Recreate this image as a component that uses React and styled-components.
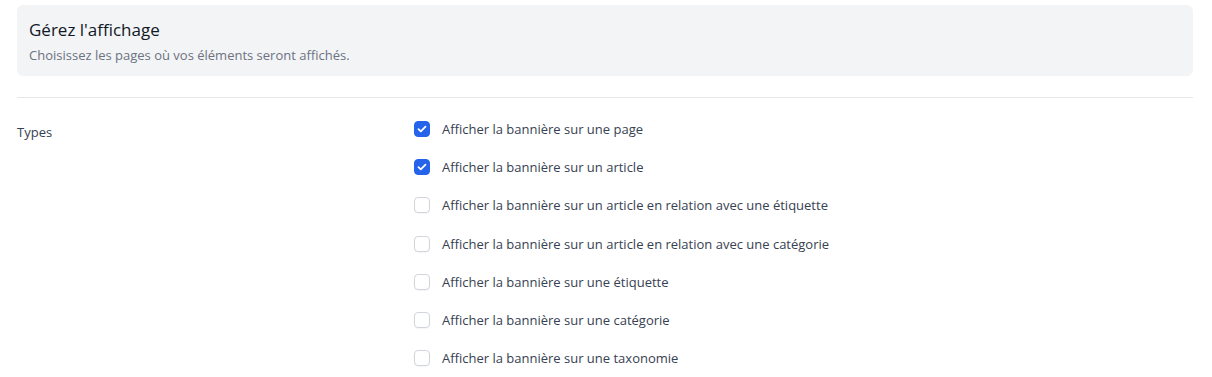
import React, { useState } from 'react';
import styled, { createGlobalStyle } from 'styled-components';

const Global = createGlobalStyle`
  html, body { margin: 0; padding: 0; background: #ffffff; }
  body { font-family: "Open Sans", "Noto Sans", sans-serif; -webkit-font-smoothing: antialiased; }
  * { box-sizing: border-box; }
`;

const Page = styled.div`
  padding: 5px 19px 0 17px;
`;

const Header = styled.div`
  background: #f3f4f6;
  border-radius: 6px;
  padding: 12px 12px 11px;
`;

const Title = styled.h2`
  margin: 0 0 4px;
  font-size: 17px;
  line-height: 25px;
  font-weight: 400;
  color: #111827;
`;

const Subtitle = styled.p`
  margin: 0;
  font-size: 13px;
  line-height: 19px;
  color: #6b7280;
`;

const Divider = styled.hr`
  border: 0;
  border-top: 1px solid #e5e7eb;
  margin: 21px 0 21px;
`;

const Field = styled.div`
  display: grid;
  grid-template-columns: 397px 1fr;
  align-items: start;
`;

const FieldLabel = styled.div`
  font-size: 13px;
  line-height: 20px;
  padding-top: 3px;
  color: #374151;
`;

const Options = styled.div`
  display: flex;
  flex-direction: column;
  gap: 18.2px;
`;

const Option = styled.label`
  display: flex;
  align-items: center;
  gap: 12px;
  height: 20px;
  font-size: 13px;
  color: #374151;
  cursor: pointer;
`;

const Box = styled.span`
  width: 16px;
  height: 16px;
  flex: 0 0 16px;
  border-radius: 4px;
  display: inline-flex;
  align-items: center;
  justify-content: center;
  background: ${p => (p.$checked ? '#2563eb' : '#ffffff')};
  border: 1px solid ${p => (p.$checked ? '#2563eb' : '#d1d5db')};
  box-shadow: ${p => (p.$checked ? 'none' : '0 1px 1px rgba(0,0,0,0.04)')};
`;

const HiddenInput = styled.input`
  position: absolute;
  opacity: 0;
  width: 0;
  height: 0;
`;

const items = [
  ['Afficher la bannière sur une page', true],
  ['Afficher la bannière sur un article', true],
  ['Afficher la bannière sur un article en relation avec une étiquette', false],
  ['Afficher la bannière sur un article en relation avec une catégorie', false],
  ['Afficher la bannière sur une étiquette', false],
  ['Afficher la bannière sur une catégorie', false],
  ['Afficher la bannière sur une taxonomie', false],
];

export default function App() {
  const [state, setState] = useState(items.map(i => i[1]));
  return (
    <>
      <Global />
      <Page>
        <Header>
          <Title>Gérez l'affichage</Title>
          <Subtitle>Choisissez les pages où vos éléments seront affichés.</Subtitle>
        </Header>
        <Divider />
        <Field>
          <FieldLabel>Types</FieldLabel>
          <Options>
            {items.map(([label], i) => (
              <Option key={label}>
                <HiddenInput
                  type="checkbox"
                  checked={state[i]}
                  onChange={() => setState(s => s.map((v, j) => (j === i ? !v : v)))}
                />
                <Box $checked={state[i]}>
                  {state[i] && (
                    <svg width="10" height="8" viewBox="0 0 10 8" fill="none">
                      <path d="M1.5 4.2L3.8 6.3L8.5 1.7" stroke="#fff" strokeWidth="1.8" strokeLinecap="round" strokeLinejoin="round" />
                    </svg>
                  )}
                </Box>
                {label}
              </Option>
            ))}
          </Options>
        </Field>
      </Page>
    </>
  );
}
